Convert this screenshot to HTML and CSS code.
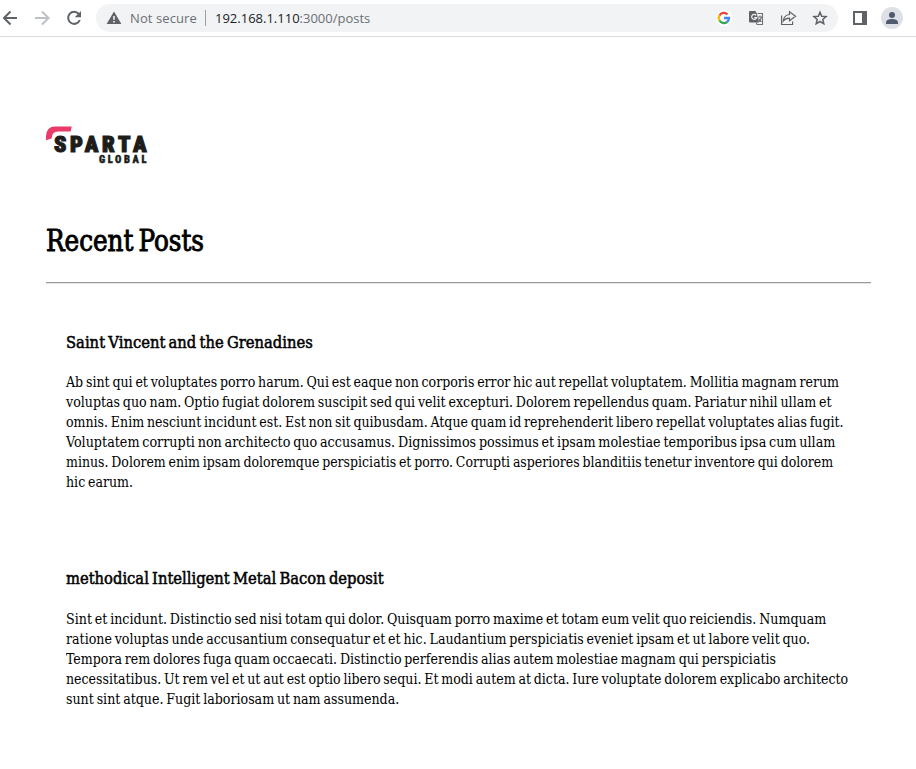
FILE: index.html
```html
<!DOCTYPE html>
<html lang="en">
<head>
<meta charset="utf-8">
<title>Recent Posts</title>
<link rel="stylesheet" href="styles.css">
</head>
<body>
<header class="toolbar">
  <svg class="nav" width="96" height="36" viewBox="0 0 96 36" fill="none" stroke-width="2">
    <path stroke="#5f6368" d="M17 18H4M10.500 11.500L4 18L10.500 24.500"/>
    <path stroke="#bdc1c6" d="M35 18H48M42 11.500L48.500 18L42 24.500"/>
    <path stroke="#5f6368" d="M78.800 14A6 6 0 1 0 79.800 20"/>
    <path fill="#5f6368" d="M81 11V17.300H74.700Z"/>
  </svg>
  <div class="omnibox">
    <svg class="warn" width="16" height="14" viewBox="0 0 16 14"><path fill="#5f6368" d="M8 .5L15.400 13H.6Z"/><path fill="#f1f3f4" d="M7.200 5h1.600v3.800H7.200zM7.200 10h1.600v1.500H7.200z"/></svg>
    <span class="insecure">Not secure</span>
    <i class="divider"></i>
    <span class="url"><b>192.168.1.110</b>:3000/posts</span>
    <svg class="actions" width="122" height="28" viewBox="716 4 122 28" fill="none">
      <circle cx="724" cy="18" r="8" fill="#fff"/>
      <g stroke-width="2.300">
        <path stroke="#ea4335" d="M719.500 15.500A5 5 0 0 1 727.500 14.500"/>
        <path stroke="#fbbc05" d="M719.500 15.400A5 5 0 0 0 719.500 20.600"/>
        <path stroke="#34a853" d="M719.500 20.500A5 5 0 0 0 727.200 21.800"/>
        <path stroke="#4285f4" d="M724 18H729A5 5 0 0 1 727 22"/>
      </g>
      <path fill="#5f6368" d="M750 11h5.500l1.300 2.500 2.200 9h-9q-1 0-1-1v-9.500q0-1 1-1z"/>
      <path stroke="#f1f3f4" stroke-width="1.200" d="M756.200 15.300a2.500 2.500 0 1 0 .4 2.200h-2.400"/>
      <path stroke="#6f7377" stroke-width="1.100" d="M757.500 13.500h5v11h-5.500l-1-2M758 17h4.500M760 15.500v1.500M761.500 17q-.8 3-3 4.500M758.500 18.500q1 2 3 3"/>
      <path stroke="#5f6368" stroke-width="1.200" d="M781.600 15.500v9h11V21.500M789.500 11.800l6 4.500-6 4.500v-2.700q-4-.1-6.200 2.900 .5-5.800 6.200-6.500z"/>
      <path stroke="#5f6368" stroke-width="1.500" d="M820 12.200l1.700 4 4.400.4-3.300 2.900 1 4.300-3.800-2.300-3.800 2.300 1-4.300-3.300-2.900 4.400-.4z"/>
    </svg>
  </div>
  <svg class="tools" width="78" height="36" viewBox="838 0 78 36">
    <path fill="#5f6368" fill-rule="evenodd" d="M853 11h14v14h-14zM855 13v10h7V13z"/>
    <circle cx="892" cy="18" r="11" fill="#dde1e7"/>
    <circle cx="892" cy="15" r="3" fill="#4f5b6d"/>
    <path fill="#4f5b6d" d="M886 24v-1.500q0-3.500 6-3.500t6 3.500V24z"/>
  </svg>
</header>
<main class="page">
  <svg class="logo" width="102" height="40" viewBox="46 126 102 40">
    <path fill="#ea3a68" d="M46 140.300V136Q46.500 126.400 55 126.400H71.700L70.700 131.600H58Q51.800 131.600 51.600 138.500Z"/>
    <text class="sparta" x="54" y="151.500" textLength="92.500">SPARTA</text>
    <text class="global" x="99" y="163" textLength="47.500">GLOBAL</text>
  </svg>
  <h1><span>Recent Posts</span></h1>
  <hr>
  <article>
    <h2 class="t1"><span>Saint Vincent and the Grenadines</span></h2>
    <p>
      <span style="--w:773">Ab sint qui et voluptates porro harum. Qui est eaque non corporis error hic aut repellat voluptatem. Mollitia magnam rerum</span>
      <span style="--w:766">voluptas quo nam. Optio fugiat dolorem suscipit sed qui velit excepturi. Dolorem repellendus quam. Pariatur nihil ullam et</span>
      <span style="--w:778">omnis. Enim nesciunt incidunt est. Est non sit quibusdam. Atque quam id reprehenderit libero repellat voluptates alias fugit.</span>
      <span style="--w:769">Voluptatem corrupti non architecto quo accusamus. Dignissimos possimus et ipsam molestiae temporibus ipsa cum ullam</span>
      <span style="--w:767">minus. Dolorem enim ipsam doloremque perspiciatis et porro. Corrupti asperiores blanditiis tenetur inventore qui dolorem</span>
      <span style="--w:67">hic earum.</span>
    </p>
  </article>
  <article>
    <h2 class="t2"><span>methodical Intelligent Metal Bacon deposit</span></h2>
    <p>
      <span style="--w:760">Sint et incidunt. Distinctio sed nisi totam qui dolor. Quisquam porro maxime et totam eum velit quo reiciendis. Numquam</span>
      <span style="--w:744">ratione voluptas unde accusantium consequatur et et hic. Laudantium perspiciatis eveniet ipsam et ut labore velit quo.</span>
      <span style="--w:710">Tempora rem dolores fuga quam occaecati. Distinctio perferendis alias autem molestiae magnam qui perspiciatis</span>
      <span style="--w:782">necessitatibus. Ut rem vel et ut aut est optio libero sequi. Et modi autem at dicta. Iure voluptate dolorem explicabo architecto</span>
      <span style="--w:333">sunt sint atque. Fugit laboriosam ut nam assumenda.</span>
    </p>
  </article>
</main>
<script src="fit.js"></script>
</body>
</html>
```
FILE: styles.css
```css
* { box-sizing: border-box; }
body { margin: 0; background: #fff; color: #000; overflow: hidden; }
svg { display: block; flex: none; }
.toolbar { display: flex; align-items: flex-start; height: 37px; border-bottom: 1px solid #dadce0; }
.omnibox { display: flex; align-items: center; width: 742px; height: 28px; margin-top: 4px; padding-left: 10px; border-radius: 14px; background: #f1f3f4; font: 14px/28px "Open Sans", "Noto Sans", sans-serif; color: #6b6f74; white-space: nowrap; }
.insecure { width: 67px; margin-left: 8px; font-size: 13px; letter-spacing: .1px; }
.divider { width: 1px; height: 16px; margin: 0 9px 0 8px; background: #9aa0a6; }
.url { font-size: 13px; }
.url b { font-weight: 400; color: #202124; }
.actions { margin-left: auto; }
.page { padding: 89px 45px 0 46px; font-family: "DejaVu Serif Condensed", "DejaVu Serif", serif; font-stretch: condensed; }
.logo text { font-family: Roboto, sans-serif; font-weight: 900; fill: #1d1d1b; stroke: #1d1d1b; stroke-linejoin: miter; }
.logo .sparta { font-size: 22.500px; stroke-width: 1.200px; }
.logo .global { font-size: 10.500px; stroke-width: .4px; }
h1, h2 { margin: 0; font-weight: 400; white-space: nowrap; }
h1 span, h2 span, p span { display: block; width: max-content; transform-origin: 0 50%; }
h1 { height: 40px; margin-top: 55px; font-size: 29px; line-height: 41px; word-spacing: -3px; -webkit-text-stroke: .9px #000; }
h1 span { --w: 158; }
hr { height: 2px; margin: 21px 0 0; border: 0; border-top: 1px solid #9a9a9a; border-bottom: 1px solid #e6e6e6; }
article { padding: 0 20px; }
h2 { height: 24px; margin-top: 46px; font-size: 17px; line-height: 24px; word-spacing: -1.500px; -webkit-text-stroke: .5px #000; }
.t1 span { --w: 247; }
.t2 span { --w: 318; }
p { margin: 18px 0 0; font-size: 14px; line-height: 20px; word-spacing: -1.200px; white-space: nowrap; }
article + article h2 { margin-top: 74px; }
article + article p { margin-top: 19px; }
```
FILE: fit.js
```js
// Condense each line of type to its measure.
document.querySelectorAll("h1 span, h2 span, p span").forEach(line => {
  const measure = parseFloat(getComputedStyle(line).getPropertyValue("--w"));
  line.style.transform = `scaleX(${measure / line.offsetWidth})`;
});
```
